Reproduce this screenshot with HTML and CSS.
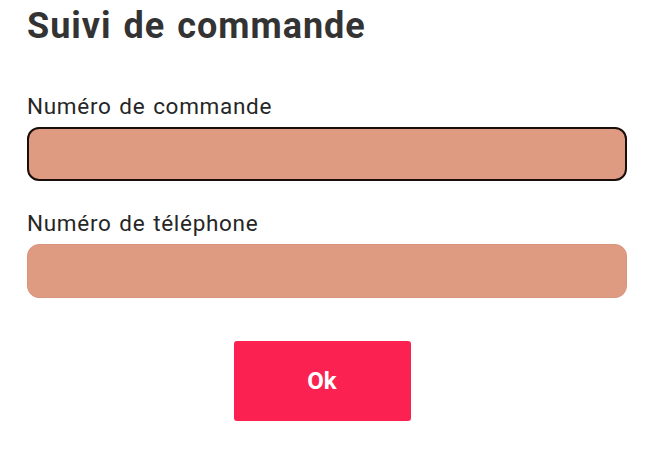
FILE: index.html
```html
<!DOCTYPE html>
<html lang="fr">
<head>
<meta charset="utf-8">
<title>Suivi de commande</title>
<link rel="stylesheet" href="styles.css">
</head>
<body>
<main class="tracking">
  <h1 class="tracking-title">Suivi de commande</h1>
  <form class="tracking-form">
    <div class="field">
      <label class="field-label" for="order">Numéro de commande</label>
      <input class="field-input is-focused" id="order" type="text">
    </div>
    <div class="field">
      <label class="field-label" for="phone">Numéro de téléphone</label>
      <input class="field-input" id="phone" type="text">
    </div>
    <div class="actions">
      <button class="submit" type="button">Ok</button>
    </div>
  </form>
</main>
</body>
</html>
```

FILE: styles.css
```css
html, body {
  margin: 0;
  padding: 0;
  background: #ffffff;
}

body {
  font-family: Roboto, "Liberation Sans", Arial, sans-serif;
  color: #222222;
}

.tracking {
  padding: 6px 0 0 27px;
  width: 600px;
}

.tracking-title {
  margin: 0;
  font-size: 36px;
  line-height: 40px;
  font-weight: 700;
  letter-spacing: 1px;
  word-spacing: 2px;
  color: #333333;
}

.tracking-form {
  display: flex;
  flex-direction: column;
  margin-top: 47px;
}

.field {
  display: flex;
  flex-direction: column;
  gap: 8px;
  margin-bottom: 29px;
}

.field-label {
  font-size: 22.5px;
  line-height: 26px;
  letter-spacing: 0.7px;
  word-spacing: 1.5px;
  color: #262626;
}

.field-input {
  box-sizing: border-box;
  width: 600px;
  height: 54px;
  margin: 0;
  border: 1px solid #d9957f;
  border-radius: 12px;
  background: #df9a82;
  outline: none;
}

.field-input.is-focused {
  border: 2px solid #1a0e0a;
}

.actions {
  display: flex;
  justify-content: center;
  padding-top: 14px;
  padding-right: 10px;
}

.submit {
  width: 177px;
  height: 80px;
  border: none;
  border-radius: 3px;
  background: #fb2150;
  color: #ffffff;
  font-family: Roboto, "Liberation Sans", Arial, sans-serif;
  font-size: 24px;
  font-weight: 700;
  cursor: pointer;
}
```
